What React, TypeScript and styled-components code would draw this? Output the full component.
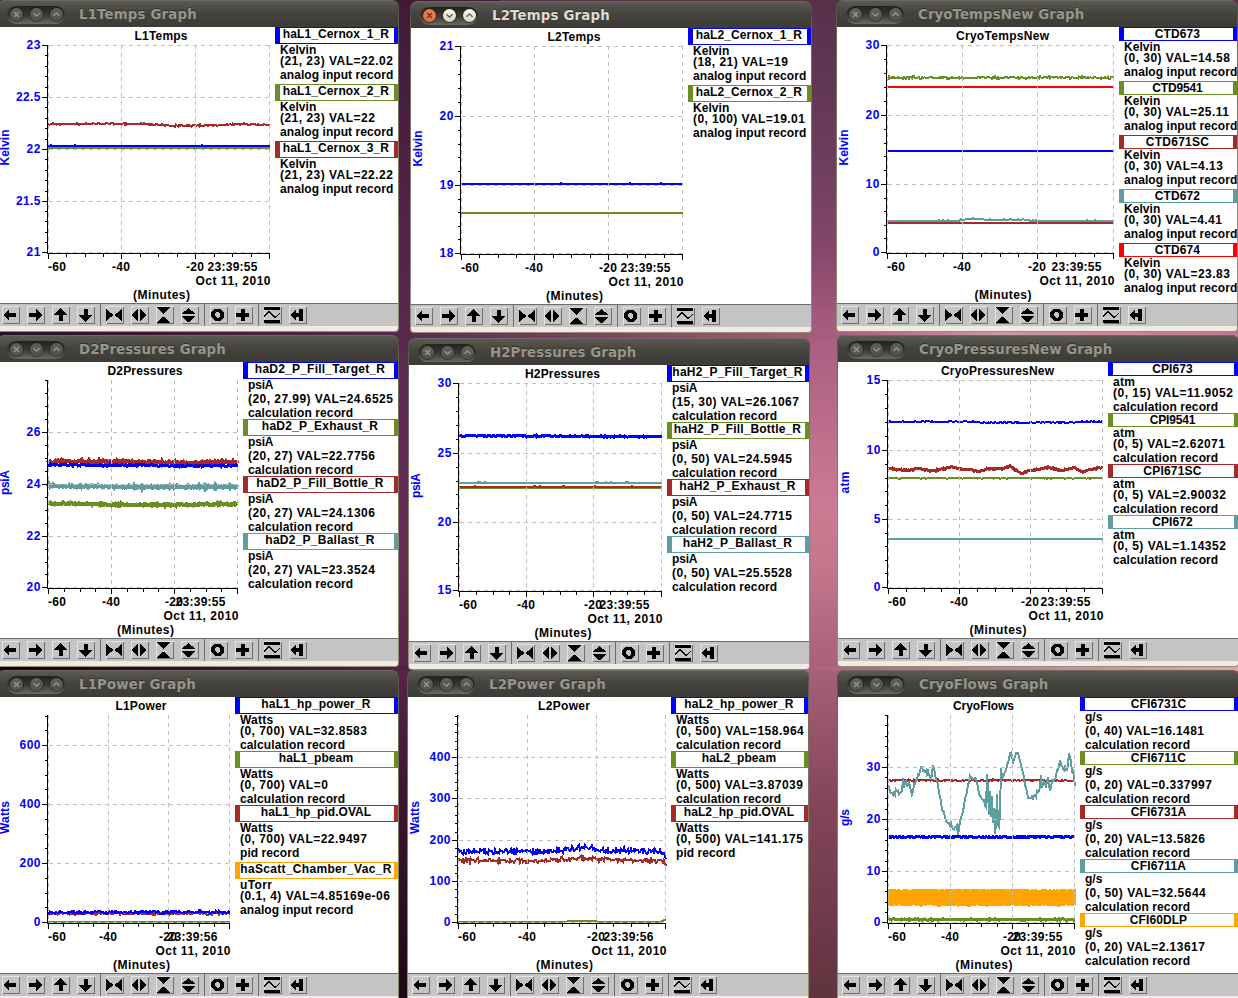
import React from "react";
import styled, { createGlobalStyle } from "styled-components";

const BLUE = "#0000ff";
const OLIVE = "#6b8e23";
const BROWN = "#a52a2a";
const TEAL = "#5f9ea0";
const ORANGE = "#ffa500";
const RED = "#ff0000";

const PLOT_FONT = '"Liberation Sans", Arial, sans-serif';
const TITLE_FONT = '"DejaVu Sans", sans-serif';

type Pt = [number, number];
interface Series {
  color: string;
  pts: Pt[];
  amp?: number;
  width?: number;
  band?: number;
  blips?: number;
}
interface Entry {
  color: string;
  name: string;
  nameW: number;
  unit: string;
  value: string;
  valueW: number;
  record: string;
}
interface Graph {
  title: string;
  titleW: number;
  barW: number;
  x: number;
  y: number;
  lastX: number;
  active?: boolean;
  unit: string;
  time: string;
  labels: [string, number][];
  div: number;
  topLine: boolean;
  entries: Entry[];
  series: Series[];
}

const COMMON_W: Record<string, number> = {
  Kelvin: 36,
  psiA: 25,
  atm: 22,
  Watts: 33,
  "g/s": 17,
  uTorr: 32,
  "analog input record": 113,
  "calculation record": 105,
  "pid record": 59,
};

const ctx = document.createElement("canvas").getContext("2d")!;
/* Letter spacing that gives a text the wanted advance width. */
function tracking(text: string, width: number, font: string) {
  ctx.font = font;
  return (width - ctx.measureText(text).width) / text.length;
}
const plotTracking = (text: string, width: number) =>
  tracking(text, width + 0.3, `bold 12px ${PLOT_FONT}`);

const e = (
  color: string,
  name: string,
  nameW: number,
  unit: string,
  value: string,
  valueW: number,
  record: string
): Entry => ({ color, name, nameW, unit, value, valueW, record });

const A = "analog input record";
const C = "calculation record";
const flat = (y: number): Pt[] => [[0, y], [1, y]];

/* Raw flow samples: x 182..739, y measured on the same enlarged scale. */
const FLOW: Pt[] = [
  [182, 358], [186, 375], [190, 388], [200, 385], [215, 378], [224, 377], [226, 325], [228, 372], [235, 342], [238, 362],
  [246, 350], [252, 396], [260, 358], [268, 350], [272, 325], [282, 308], [290, 325], [300, 326], [310, 340], [318, 300],
  [322, 335], [332, 365], [342, 425], [355, 465], [365, 478], [378, 490], [388, 480], [389, 520], [395, 480], [403, 440],
  [412, 405], [420, 360], [428, 335], [440, 345], [447, 350], [455, 390], [462, 402], [470, 412], [473, 470], [476, 330],
  [479, 325], [482, 490], [485, 325], [488, 490], [491, 350], [494, 500], [497, 400], [500, 512], [503, 505], [506, 370],
  [509, 480], [512, 485], [515, 480], [518, 310], [521, 350], [525, 330], [530, 322], [540, 290], [550, 260], [556, 290],
  [562, 263], [570, 268], [578, 300], [586, 325], [592, 370], [600, 398], [610, 398], [620, 390], [630, 380], [635, 370],
  [637, 322], [640, 370], [648, 350], [655, 362], [658, 335], [665, 389], [670, 350], [680, 345], [690, 300], [697, 291],
  [705, 310], [715, 322], [721, 270], [724, 272], [728, 312], [735, 325], [739, 362],
];

const GRAPHS: Graph[] = [
  {
    title: "L1Temps", titleW: 53, barW: 117, x: -3, y: 0, lastX: 269.5, unit: "Kelvin", time: "23:39:55",
    labels: [["23", 0], ["22.5", 52], ["22", 104], ["21.5", 156], ["21", 207]], div: 5, topLine: true,
    entries: [
      e(BLUE, "haL1_Cernox_1_R", 106, "Kelvin", "(21, 23) VAL=22.02", 113, A),
      e(OLIVE, "haL1_Cernox_2_R", 106, "Kelvin", "(21, 23) VAL=22", 95, A),
      e(BROWN, "haL1_Cernox_3_R", 106, "Kelvin", "(21, 23) VAL=22.22", 113, A),
    ],
    series: [
      { color: BROWN, pts: [[0, 124], [0.44, 124], [0.52, 125.5], [0.68, 125.6], [0.8, 124.6], [0.9, 124.2], [1, 125.3]], amp: 1.2 },
      { color: OLIVE, pts: flat(148) },
      { color: BLUE, pts: flat(146), blips: 0.015 },
    ],
  },
  {
    title: "L2Temps", titleW: 53, barW: 117, x: 410, y: 1, lastX: 682.5, active: true, unit: "Kelvin", time: "23:39:55",
    labels: [["21", 0], ["20", 70], ["19", 139], ["18", 207]], div: 5, topLine: true,
    entries: [
      e(BLUE, "haL2_Cernox_1_R", 106, "Kelvin", "(18, 21) VAL=19", 95, A),
      e(OLIVE, "haL2_Cernox_2_R", 106, "Kelvin", "(0, 100) VAL=19.01", 112, A),
    ],
    series: [
      { color: OLIVE, pts: flat(213) },
      { color: BLUE, pts: flat(184), blips: 0.006 },
    ],
  },
  {
    title: "CryoTempsNew", titleW: 93, barW: 165.5, x: 836, y: 0, lastX: 1113.5, unit: "Kelvin", time: "23:39:55",
    labels: [["30", 0], ["20", 70], ["10", 139], ["0", 207]], div: 5, topLine: true,
    entries: [
      e(BLUE, "CTD673", 45, "Kelvin", "(0, 30) VAL=14.58", 106, A),
      e(OLIVE, "CTD9541", 50, "Kelvin", "(0, 30) VAL=25.11", 105, A),
      e(BROWN, "CTD671SC", 63, "Kelvin", "(0, 30) VAL=4.13", 99, A),
      e(TEAL, "CTD672", 45, "Kelvin", "(0, 30) VAL=4.41", 98, A),
      e(RED, "CTD674", 45, "Kelvin", "(0, 30) VAL=23.83", 106, A),
    ],
    series: [
      { color: RED, pts: flat(87) },
      { color: TEAL, pts: [[0, 221], [0.31, 221], [0.33, 220], [0.36, 219], [0.42, 219], [0.44, 220.4], [0.56, 220.4], [0.6, 219.4], [0.64, 221], [1, 221]], blips: 0.06 },
      { color: BROWN, pts: flat(223) },
      { color: OLIVE, pts: flat(77.7), amp: 1.6 },
      { color: BLUE, pts: flat(151), blips: 0.003 },
    ],
  },
  {
    title: "D2Pressures", titleW: 75, barW: 146, x: -3, y: 335, lastX: 237.5, unit: "psiA", time: "23:39:55",
    labels: [["26", 52], ["24", 104], ["22", 156], ["20", 207]], div: 4, topLine: false,
    entries: [
      e(BLUE, "haD2_P_Fill_Target_R", 130, "psiA", "(20, 27.99) VAL=24.6525", 145, C),
      e(OLIVE, "haD2_P_Exhaust_R", 116, "psiA", "(20, 27) VAL=22.7756", 127, C),
      e(BROWN, "haD2_P_Fill_Bottle_R", 127, "psiA", "(20, 27) VAL=24.1306", 127, C),
      e(TEAL, "haD2_P_Ballast_R", 109, "psiA", "(20, 27) VAL=23.3524", 127, C),
    ],
    series: [
      { color: TEAL, pts: [[0, 485.6], [0.5, 487], [1, 487]], amp: 1.8, width: 4 },
      { color: BROWN, pts: [[0, 461], [0.5, 462], [0.65, 463], [1, 462]], amp: 1.8, width: 4 },
      { color: BLUE, pts: [[0, 465], [0.5, 465.3], [0.65, 466], [1, 465.7]], amp: 1.2, width: 3 },
      { color: OLIVE, pts: [[0, 503.3], [0.5, 505], [1, 504]], amp: 1.2, width: 4 },
    ],
  },
  {
    title: "H2Pressures", titleW: 75, barW: 145.5, x: 408, y: 338, lastX: 661.5, unit: "psiA", time: "23:39:55",
    labels: [["30", 0], ["25", 70], ["20", 139], ["15", 207]], div: 5, topLine: true,
    entries: [
      e(BLUE, "haH2_P_Fill_Target_R", 130, "psiA", "(15, 30) VAL=26.1067", 127, C),
      e(OLIVE, "haH2_P_Fill_Bottle_R", 127, "psiA", "(0, 50) VAL=24.5945", 120, C),
      e(BROWN, "haH2_P_Exhaust_R", 116, "psiA", "(0, 50) VAL=24.7715", 120, C),
      e(TEAL, "haH2_P_Ballast_R", 109, "psiA", "(0, 50) VAL=25.5528", 120, C),
    ],
    series: [
      { color: TEAL, pts: flat(483.2), blips: 0.04 },
      { color: OLIVE, pts: flat(488) },
      { color: BROWN, pts: flat(487), blips: 0.03 },
      { color: BLUE, pts: [[0, 435.7], [1, 436.7]], amp: 0.9, width: 3 },
    ],
  },
  {
    title: "CryoPressuresNew", titleW: 113, barW: 192.5, x: 837, y: 335, lastX: 1102.5, unit: "atm", time: "23:39:55",
    labels: [["15", 0], ["10", 70], ["5", 139], ["0", 207]], div: 5, topLine: true,
    entries: [
      e(BLUE, "CPI673", 40, "atm", "(0, 15) VAL=11.9052", 120, C),
      e(OLIVE, "CPI9541", 45, "atm", "(0, 5) VAL=2.62071", 112, C),
      e(BROWN, "CPI671SC", 58, "atm", "(0, 5) VAL=2.90032", 113, C),
      e(TEAL, "CPI672", 40, "atm", "(0, 5) VAL=1.14352", 113, C),
    ],
    series: [
      { color: TEAL, pts: flat(539) },
      { color: OLIVE, pts: flat(478.2), amp: 0.7 },
      {
        color: BROWN, width: 3, amp: 1,
        pts: [[0, 468.5], [0.05, 469.5], [0.1, 470.5], [0.14, 468], [0.2, 471], [0.25, 469.5], [0.3, 466.5], [0.34, 469.5], [0.38, 469.5], [0.42, 471.5],
          [0.46, 469], [0.54, 468.5], [0.57, 465.5], [0.59, 470], [0.62, 473], [0.67, 470.5], [0.74, 467.5], [0.81, 470.5], [0.87, 467.5], [0.9, 472], [0.95, 469], [1, 467.5]],
      },
      { color: BLUE, pts: [[0, 421.6], [0.4, 421.6], [0.44, 422.6], [0.88, 422.4], [0.9, 421.6], [1, 421.8]], amp: 0.7 },
    ],
  },
  {
    title: "L1Power", titleW: 51, barW: 116, x: -3, y: 670, lastX: 229.5, unit: "Watts", time: "23:39:56",
    labels: [["600", 30], ["400", 89], ["200", 148], ["0", 207]], div: 4, topLine: false,
    entries: [
      e(BLUE, "haL1_hp_power_R", 109, "Watts", "(0, 700) VAL=32.8583", 127, C),
      e(OLIVE, "haL1_pbeam", 74, "Watts", "(0, 700) VAL=0", 88, C),
      e(BROWN, "haL1_hp_pid.OVAL", 110, "Watts", "(0, 700) VAL=22.9497", 127, "pid record"),
      e(ORANGE, "haScatt_Chamber_Vac_R", 151, "uTorr", "(0.1, 4) VAL=4.85169e-06", 150, A),
    ],
    series: [
      { color: OLIVE, pts: flat(922) },
      { color: BROWN, pts: flat(913.5), amp: 1.7 },
      { color: BLUE, pts: flat(912.2), amp: 1.9 },
    ],
  },
  {
    title: "L2Power", titleW: 52, barW: 116, x: 407, y: 670, lastX: 665.5, unit: "Watts", time: "23:39:56",
    labels: [["400", 42], ["300", 83], ["200", 125], ["100", 166], ["0", 207]], div: 5, topLine: false,
    entries: [
      e(BLUE, "haL2_hp_power_R", 109, "Watts", "(0, 500) VAL=158.964", 128, C),
      e(OLIVE, "haL2_pbeam", 74, "Watts", "(0, 500) VAL=3.87039", 127, C),
      e(BROWN, "haL2_hp_pid.OVAL", 110, "Watts", "(0, 500) VAL=141.175", 127, "pid record"),
    ],
    series: [
      { color: OLIVE, pts: [[0, 922], [0.52, 922], [0.53, 921], [0.66, 921], [0.67, 922], [0.97, 922], [1, 919.5]] },
      { color: BROWN, pts: [[0, 860.3], [0.4, 860.5], [0.6, 857.5], [0.7, 860], [0.98, 860.5], [0.99, 862], [1, 865]], amp: 2.8 },
      { color: BLUE, pts: [[0, 851], [0.3, 851.8], [0.48, 851], [0.56, 848], [0.64, 847.5], [0.7, 850.5], [0.985, 851], [1, 857]], amp: 3.6 },
    ],
  },
  {
    title: "CryoFlows", titleW: 61, barW: 128.5, x: 837, y: 670, lastX: 1074.5, unit: "g/s", time: "23:39:55",
    labels: [["30", 52], ["20", 104], ["10", 156], ["0", 207]], div: 5, topLine: false,
    entries: [
      e(BLUE, "CFI6731C", 55, "g/s", "(0, 40) VAL=16.1481", 119, C),
      e(OLIVE, "CFI6711C", 55, "g/s", "(0, 20) VAL=0.337997", 127, C),
      e(BROWN, "CFI6731A", 55, "g/s", "(0, 20) VAL=13.5826", 120, C),
      e(TEAL, "CFI6711A", 55, "g/s", "(0, 50) VAL=32.5644", 121, C),
      e(ORANGE, "CFI60DLP", 57, "g/s", "(0, 20) VAL=2.13617", 120, C),
    ],
    series: [
      { color: ORANGE, pts: flat(897.3), band: 7.8, amp: 1 },
      { color: BROWN, pts: flat(780.4), amp: 1.1 },
      { color: TEAL, pts: FLOW.map(([x, y]) => [(x - 182) / 557, 665 + y / 3] as Pt), amp: 3.8 },
      { color: OLIVE, pts: flat(919.5), amp: 1, width: 3 },
      { color: BLUE, pts: flat(837), amp: 0.9, width: 3 },
    ],
  },
];

const GlobalStyle = createGlobalStyle`
  html, body { margin: 0; padding: 0; overflow: hidden; }
`;

const Desktop = styled.main`
  position: relative;
  width: 1238px;
  height: 998px;
  overflow: hidden;
  background:
    linear-gradient(90deg, #281226 0, #582850 398px, #8a486c 650px, #a85d7c 836px, #cf96a5 1000px, #c0788f 1238px) 0 331px / 1238px 7px no-repeat,
    linear-gradient(90deg, #12060f 0, #522045 398px, #8a486c 650px, #b0667f 838px, #e6a4af 1238px) 0 666px / 1238px 5px no-repeat,
    linear-gradient(180deg, #3f1b37 0, #5a2850 335px, #642e55 560px, #582348 670px, #3a1630 800px, #1c0a14 998px) 0 0 / 500px 998px no-repeat,
    linear-gradient(180deg, #57304a 0, #6b3d5c 150px, #85466a 250px, #a85d80 330px, #c97b93 500px, #c4788c 560px, #a6607a 670px, #84465a 800px, #60333f 998px);
`;

const Window = styled.section<{ $x: number; $y: number }>`
  position: absolute;
  left: ${(p) => p.$x}px;
  top: ${(p) => p.$y}px;
  width: 402px;
  height: 332px;
  box-sizing: border-box;
  display: flex;
  flex-direction: column;
  padding: 0 1px 1px;
  background: linear-gradient(180deg, #4b4a44 0, #6b6553 30px, #8b8570 200px, #958c74 332px);
  border-radius: 7px 7px 4px 4px;
  overflow: hidden;
`;

const TitleBar = styled.header`
  flex: 0 0 27px;
  box-sizing: border-box;
  display: flex;
  align-items: center;
  gap: 14px;
  padding: 1px 0 0 9px;
  border-top: 1px solid #6b6a62;
  border-radius: 6px 6px 0 0;
  background: linear-gradient(180deg, #5a5952 0, #44433e 12px, #3c3b37 26px);
`;

const ButtonTray = styled.div`
  display: flex;
  align-items: center;
  justify-content: center;
  gap: 7px;
  width: 58px;
  height: 18px;
  border-radius: 9px;
  background: linear-gradient(180deg, #24221f 0, #3a3935 50%, #6a6963 100%);
`;

const RoundButton = styled.span<{ $fill: string }>`
  display: flex;
  width: 13px;
  height: 13px;
  border-radius: 50%;
  background: ${(p) => p.$fill};
  box-shadow: 0 0 0 1px rgba(30, 28, 26, 0.55);
`;

const Caption = styled.h1<{ $active?: boolean; $ls: number }>`
  margin: 0;
  font: bold 13.33px/16px ${TITLE_FONT};
  letter-spacing: ${(p) => p.$ls}px;
  color: ${(p) => (p.$active ? "#dfdbd2" : "#98958a")};
  text-shadow: 0 -1px 0 rgba(0, 0, 0, 0.35);
  white-space: nowrap;
`;

const Content = styled.div`
  flex: 0 0 276px;
  display: flex;
  background: #fff;
  overflow: hidden;
`;

const Plot = styled.svg`
  display: block;
  flex: none;
  text {
    font: bold 12px ${PLOT_FONT};
  }
`;

const Legend = styled.aside`
  flex: 1;
  min-width: 0;
`;

const LegendEntry = styled.div`
  padding-bottom: 1px;
`;

const LegendName = styled.div<{ $color: string; $tall: boolean }>`
  box-sizing: border-box;
  height: ${(p) => (p.$tall ? 17 : 14)}px;
  border: solid ${(p) => p.$color};
  border-width: 1px 4px 1px 5px;
  padding-right: 2px;
  display: flex;
  justify-content: center;
`;

const LegendLine = styled.div<{ $tall: boolean }>`
  height: ${(p) => (p.$tall ? 14 : 11)}px;
  padding-left: 5px;
`;

const LegendText = styled.span<{ $ls: number }>`
  display: block;
  font: bold 12px/12px ${PLOT_FONT};
  letter-spacing: ${(p) => p.$ls}px;
  color: #000;
  white-space: nowrap;
`;

const Toolbar = styled.footer`
  flex: 0 0 23px;
  box-sizing: border-box;
  display: flex;
  align-items: flex-start;
  padding: 2px 0 0 4px;
  border-top: 1px solid #6c6c6c;
  background: #c4c4c4;
`;

const ToolButton = styled.span`
  width: 18px;
  height: 18px;
  margin-right: 7px;
  box-sizing: border-box;
  background: #c4c4c4;
  box-shadow: inset 1px 1px 0 #e4e4e4, inset -1px -1px 0 #6e6e6e;
  svg {
    display: block;
  }
`;

const Divider = styled.i`
  width: 1px;
  height: 22px;
  margin: -2px 5px 0 -2px;
  background: #6c6c6c;
`;

const BottomFrame = styled.div`
  flex: 1;
  background: #f0ebe2;
  border-radius: 0 0 3px 3px;
`;

const hasDescender = (s: string) => /[gjpqy_(),/]/.test(s);

function sample(pts: Pt[], t: number) {
  for (let i = 1; i < pts.length; i++) {
    if (t <= pts[i][0]) {
      const [x0, y0] = pts[i - 1];
      const [x1, y1] = pts[i];
      return y0 + ((y1 - y0) * (t - x0)) / (x1 - x0 || 1);
    }
  }
  return pts[pts.length - 1][1];
}

function tracePath(s: Series, x0: number, x1: number, seed: number) {
  let state = seed * 7919 + 17;
  const rnd = () => {
    state = (state * 1103515245 + 12345) % 2147483648;
    return state / 2147483648;
  };
  const n = Math.round(x1 - x0);
  let d = "";
  for (let i = 0; i <= n; i++) {
    const r = rnd() + rnd() - 1;
    let y = sample(s.pts, i / n) + r * (s.amp ?? 0);
    if (s.blips && rnd() < s.blips) y -= 1;
    if (s.band) {
      const r2 = rnd() * (s.amp ?? 0);
      d += `${i ? "L" : "M"}${x0 + i} ${(y - s.band).toFixed(1)}L${x0 + i} ${(y + s.band + r2).toFixed(1)}`;
    } else {
      d += `${i ? "L" : "M"}${x0 + i} ${y.toFixed(1)}`;
    }
  }
  return d;
}

interface LabelProps {
  x: number;
  y: number;
  w: number;
  text: string;
  anchor?: "start" | "middle" | "end";
  fill?: string;
  rotate?: boolean;
}
function Label({ x, y, w, text, anchor = "start", fill = "#000", rotate }: LabelProps) {
  return (
    <text
      x={x}
      y={y}
      fill={fill}
      textAnchor={anchor}
      textLength={w}
      transform={rotate ? `rotate(-90 ${x} ${y})` : undefined}
    >
      {text}
    </text>
  );
}

function Chart({ g, index }: { g: Graph; index: number }) {
  const cx = g.x + 1;
  const cy = g.y + 27;
  const width = g.lastX + 5.5 - cx;
  const x0 = cx + 50.5;
  const w = g.lastX - x0;
  const top = cy + 18;
  const bottom = cy + 226.5;
  const gx = [x0, Math.floor(x0 + w * 0.332) + 0.5, Math.floor(x0 + w * 0.665) + 0.5, g.lastX];
  const gy = g.labels.map(([, o]) => top + 0.5 + o);

  const minorY: number[] = [];
  for (let i = 1; i < gy.length; i++) {
    for (let k = 1; k < g.div; k++) minorY.push(gy[i] + ((gy[i - 1] - gy[i]) * k) / g.div);
  }
  if (!g.topLine) {
    const step = (gy[1] - gy[0]) / g.div;
    for (let y = gy[0] - step; y > top - 0.5; y -= step) minorY.push(y);
  }
  const minorX: number[] = [];
  for (let i = 1; i < 4; i++) for (let k = 1; k < 4; k++) minorX.push(gx[i - 1] + ((gx[i] - gx[i - 1]) * k) / 4);
  const snap = (v: number) => Math.floor(v) + 0.5;

  let axis = `M${x0 - 1} ${top}V${bottom}M${x0 - 1} ${bottom}H${g.lastX + 0.5}`;
  gy.forEach((y) => (axis += `M${x0 - 6.5} ${y}h6`));
  minorY.forEach((y) => (axis += `M${x0 - 3.5} ${snap(y)}h3`));
  gx.forEach((x) => (axis += `M${x} ${bottom}v5.5`));
  minorX.forEach((x) => (axis += `M${snap(x)} ${bottom}v3`));

  let grid = "";
  gx.forEach((x) => (grid += `M${x} ${top}V${bottom - 1}`));
  gy.forEach((y) => (grid += `M${x0} ${y}H${g.lastX}`));

  const center = (x0 + g.lastX) / 2;
  return (
    <Plot width={width} height={276} viewBox={`${cx} ${cy} ${width} 276`}>
      <Label x={center + 2} y={cy + 13} w={g.titleW} text={g.title} anchor="middle" />
      <g shapeRendering="crispEdges" fill="none">
        {g.series.map((s, i) => (
          <path key={i} d={tracePath(s, x0 - 0.5, g.lastX, index * 10 + i + 1)} stroke={s.color} strokeWidth={s.width ?? 2} />
        ))}
        <path d={grid} stroke="#bebebe" strokeDasharray="4 4" />
        <path d={axis} stroke="#000" />
      </g>
      {g.labels.map(([t], i) => (
        <Label
          key={t}
          x={cx + 42.5}
          y={gy[i] + 3.5}
          w={t.replace(".", "").length * 7 + (t.includes(".") ? 3.5 : 0)}
          text={t}
          anchor="end"
          fill={BLUE}
        />
      ))}
      <Label x={cx + 10.5} y={cy + 120.5} w={COMMON_W[g.unit]} text={g.unit} anchor="middle" fill={BLUE} rotate />
      <Label x={x0 - 0.5} y={cy + 243.5} w={18} text="-60" />
      <Label x={gx[1] - 0.5} y={cy + 243.5} w={18} text="-40" anchor="middle" />
      <Label x={gx[2] - 0.5} y={cy + 243.5} w={18} text="-20" anchor="middle" />
      <Label x={g.lastX - 12} y={cy + 243.5} w={50} text={g.time} anchor="end" />
      <Label x={g.lastX + 1} y={cy + 257.5} w={75} text="Oct 11, 2010" anchor="end" />
      <Label x={center + 2.5} y={cy + 271.5} w={57} text="(Minutes)" anchor="middle" />
    </Plot>
  );
}

const TOOL_GROUPS: React.ReactNode[][] = [
  [
    <path d="M2 9L8 3V7H15V11H8V15Z" />,
    <path d="M16 9L10 3V7H3V11H10V15Z" />,
    <path d="M9.5 2L16 9H11.5V15H7.5V9H3Z" />,
    <path d="M9.5 16L16 9H11.5V3H7.5V9H3Z" />,
  ],
  [
    <path d="M1 3L8.5 9L1 15ZM17 3L9.5 9L17 15Z" />,
    <path d="M1 9L8 2.5V15.5ZM17 9L10 2.5V15.5Z" />,
    <path d="M2 1H15L9 7.5H8ZM2 17H15L9 10.5H8Z" />,
    <path d="M8.5 2L15.5 8H1.5ZM8.5 16.5L15.5 10H1.5Z" />,
  ],
  [
    <path fillRule="evenodd" d="M6 2.5H11L15 6.5V11L11 15H6L2 11V6.5ZM7.5 6L6 7.5V10L7.5 11.5H9.5L11 10V7.5L9.5 6Z" />,
    <path d="M6.5 2.5H11V6.5H15V11H11V15H6.5V11H2V6.5H6.5Z" />,
  ],
  [
    <>
      <path d="M1 1H17V3.5H1ZM1 14H17V16.5H1Z" />
      <path d="M1 11L5.5 6H7L11.5 11H13L17 7" fill="none" stroke="#000" strokeWidth="1.4" />
    </>,
    <path d="M2 9L8 3V7H11V3H15V15H11V11H8V15Z" />,
  ],
];

function Tools() {
  return (
    <Toolbar>
      {TOOL_GROUPS.map((group, gi) => (
        <React.Fragment key={gi}>
          {gi > 0 && <Divider />}
          {group.map((icon, i) => (
            <ToolButton key={i}>
              <svg width="18" height="18" viewBox="1 0 18 18" shapeRendering="crispEdges">
                {icon}
              </svg>
            </ToolButton>
          ))}
        </React.Fragment>
      ))}
    </Toolbar>
  );
}

const GLYPHS = ["M4 4L9 9M9 4L4 9", "M3.5 5.2L6.5 8.2L9.5 5.2", "M3.5 7.8L6.5 4.8L9.5 7.8"];
const IDLE_FILL = "linear-gradient(180deg, #62615b, #504f4a)";
const CLOSE_FILL = "radial-gradient(circle at 50% 40%, #f58a62, #df5c35)";
const LIGHT_FILL = "linear-gradient(180deg, #fbfaf6, #d5d0c4)";

function GraphWindow({ g, index }: { g: Graph; index: number }) {
  const caption = `${g.title} Graph`;
  return (
    <Window $x={g.x} $y={g.y}>
      <TitleBar>
        <ButtonTray>
          {GLYPHS.map((d, i) => (
            <RoundButton key={i} $fill={g.active ? (i === 0 ? CLOSE_FILL : LIGHT_FILL) : IDLE_FILL}>
              <svg width="13" height="13" viewBox="0 0 13 13" fill="none">
                <path d={d} stroke={g.active ? (i === 0 ? "#6b2a18" : "#5a5850") : "#9c998e"} strokeWidth="1.3" />
              </svg>
            </RoundButton>
          ))}
        </ButtonTray>
        <Caption $active={g.active} $ls={tracking(caption, g.barW + 0.8, `bold 13.33px ${TITLE_FONT}`)}>
          {caption}
        </Caption>
      </TitleBar>
      <Content>
        <Chart g={g} index={index} />
        <Legend>
          {g.entries.map((en) => (
            <LegendEntry key={en.name}>
              <LegendName $color={en.color} $tall={hasDescender(en.name)}>
                <LegendText $ls={plotTracking(en.name, en.nameW)}>{en.name}</LegendText>
              </LegendName>
              <LegendLine $tall={hasDescender(en.unit)}>
                <LegendText $ls={plotTracking(en.unit, COMMON_W[en.unit])}>{en.unit}</LegendText>
              </LegendLine>
              <LegendLine $tall>
                <LegendText $ls={plotTracking(en.value, en.valueW)}>{en.value}</LegendText>
              </LegendLine>
              <LegendLine $tall={hasDescender(en.record)}>
                <LegendText $ls={plotTracking(en.record, COMMON_W[en.record])}>{en.record}</LegendText>
              </LegendLine>
            </LegendEntry>
          ))}
        </Legend>
      </Content>
      <Tools />
      <BottomFrame />
    </Window>
  );
}

export default function App() {
  return (
    <>
      <GlobalStyle />
      <Desktop>
        {GRAPHS.map((g, i) => (
          <GraphWindow key={g.title} g={g} index={i} />
        ))}
      </Desktop>
    </>
  );
}
